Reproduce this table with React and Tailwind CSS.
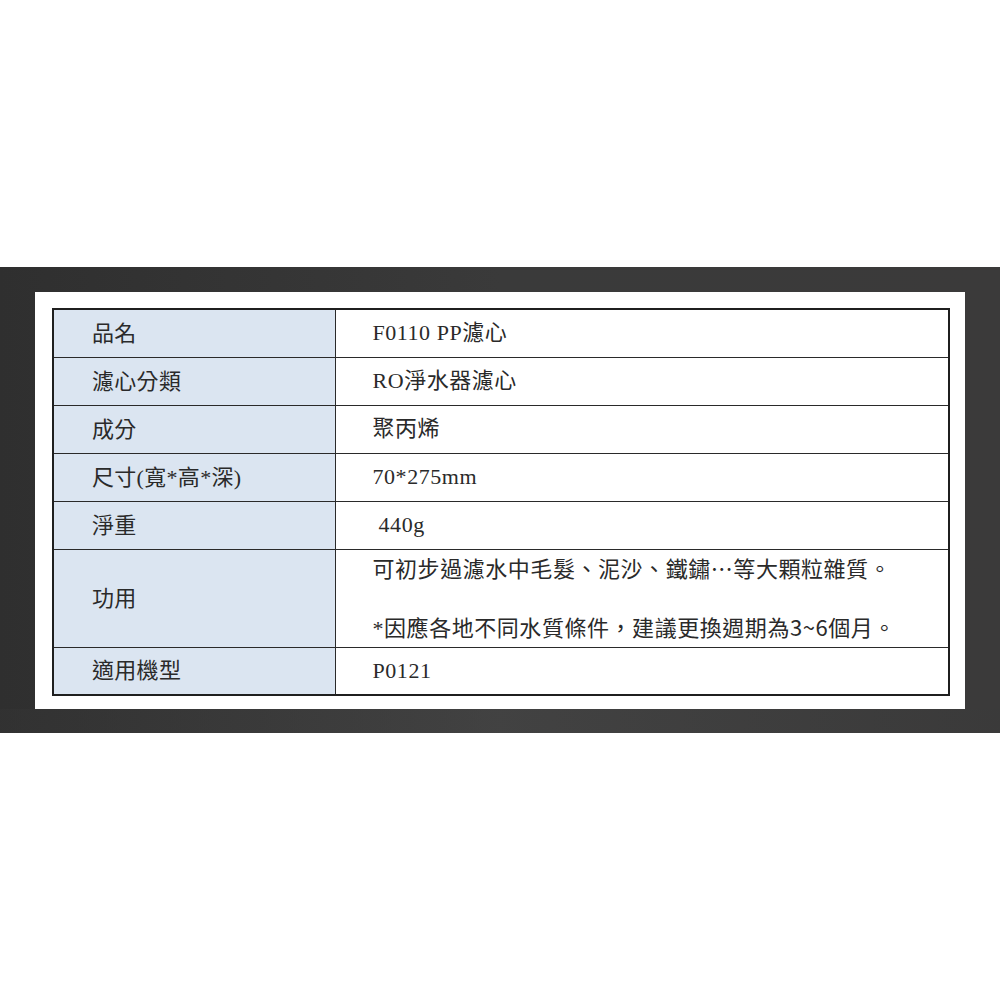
import React from 'react';

const cjk = { fontFamily: '"Noto Sans CJK TC", sans-serif' };

const rows = [
  { label: '品名', value: ['F0110 PP濾心'] },
  { label: '濾心分類', value: ['RO淨水器濾心'] },
  { label: '成分', value: ['聚丙烯'] },
  { label: '尺寸(寬*高*深)', value: ['70*275mm'] },
  { label: '淨重', value: ['\u00a0440g'] },
  {
    label: '功用',
    value: [
      <>可初步過濾水中毛髮、泥沙、鐵鏽<span style={cjk}>…</span>等大顆粒雜質。</>,
      '\u00a0',
      <>*因應各地不同水質條件，建議更換週期為<span style={cjk}>3~6</span>個月。</>,
    ],
    tall: true,
  },
  { label: '適用機型', value: ['P0121'] },
];

const App = () => {
  return (
    <div
      className="w-[1000px] h-[1000px] bg-white"
      style={{ fontFamily: '"Liberation Serif", "Noto Sans CJK TC", serif' }}
    >
      <div className="h-[267px]" />
      <div className="h-[466px] bg-gradient-to-r from-[#2f2f2f] via-[#3a3a3a] to-[#3b3a3a] pt-[25px]">
        <div className="px-[35px]">
          <div className="bg-white h-[417px] pt-[16px] px-[17px]">
            <table className="w-[898px] border-collapse border-2 border-[#1f1f1f] text-[22px] text-[#2a2a2a]">
              <tbody>
                {rows.map((r) => (
                  <tr key={r.label} className={r.tall ? 'h-[98px]' : 'h-[48px]'}>
                    <td className="w-[282px] bg-[#dbe5f1] border border-[#2a2a2a] pl-[38px] align-middle tracking-[0.3px]">
                      {r.label}
                    </td>
                    <td className="border border-[#2a2a2a] pl-[37px] align-middle leading-[28px] tracking-[0.55px]">
                      {r.value.map((v, i) => (
                        <div key={i}>{v}</div>
                      ))}
                    </td>
                  </tr>
                ))}
              </tbody>
            </table>
          </div>
        </div>
        <div className="h-[24px] bg-gradient-to-r from-[#333] via-[#474747] to-[#3a3a3a] opacity-60" />
      </div>
    </div>
  );
};

export default App;
